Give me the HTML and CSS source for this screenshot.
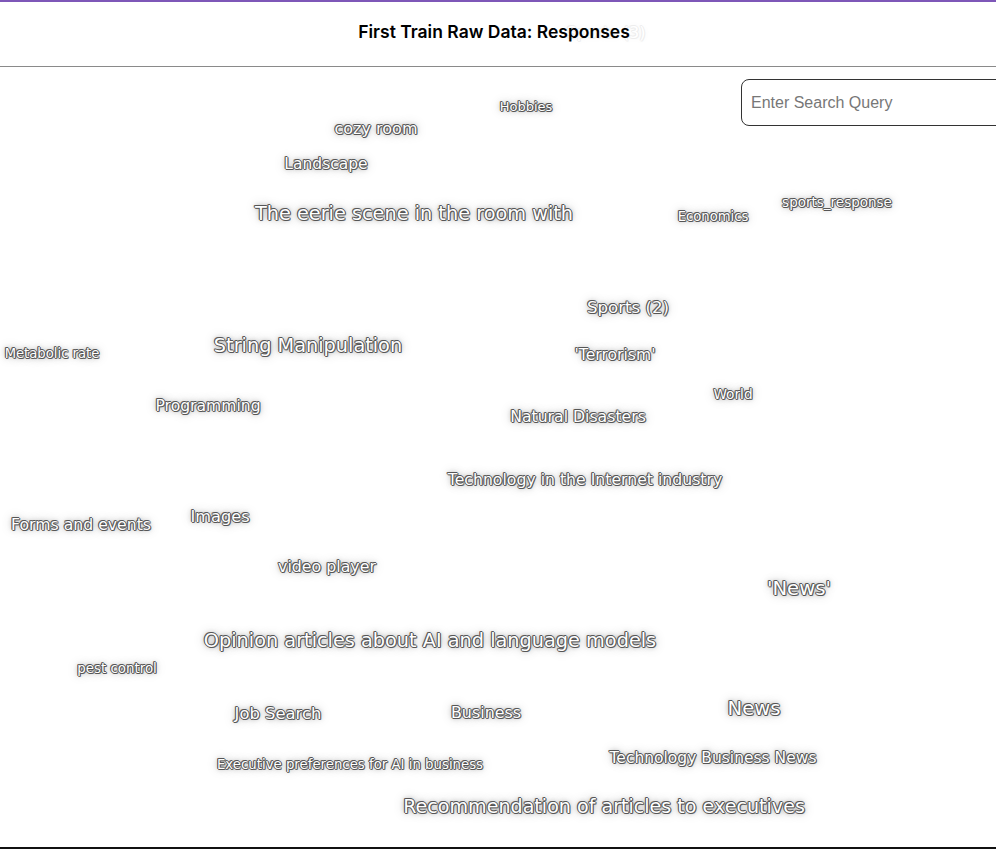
FILE: index.html
```html
<!DOCTYPE html>
<html>
<head>
    <title>First Train Raw Data: Responses</title>
    <link rel="stylesheet" href="styles.css">
</head>
<body>
    <header class="topbar">
        <h1>First Train Raw Data: Responses</h1>
    </header>
    <div class="cloud">
        <input class="search" type="text" placeholder="Enter Search Query">

        <span class="word ghost" style="left: 606px; top: -34px; font-size: 16px;">Sports (3)</span>
        <span class="word" style="left: 526px; top: 39px; font-size: 13px;">Hobbies</span>
        <span class="word" style="left: 376px; top: 62px; font-size: 16px;">cozy room</span>
        <span class="word" style="left: 326px; top: 98px; font-size: 15.5px;">Landscape</span>
        <span class="word" style="left: 414px; top: 147px; font-size: 19.3px;">The eerie scene in the room with</span>
        <span class="word" style="left: 713px; top: 150px; font-size: 13.2px;">Economics</span>
        <span class="word" style="left: 837px; top: 136px; font-size: 13.5px;">sports_response</span>
        <span class="word" style="left: 628px; top: 241px; font-size: 16.6px;">Sports (2)</span>
        <span class="word" style="left: 52px; top: 287px; font-size: 13.2px;">Metabolic rate</span>
        <span class="word" style="left: 308px; top: 279px; font-size: 19.3px;">String Manipulation</span>
        <span class="word" style="left: 615px; top: 289px; font-size: 15.6px;">'Terrorism'</span>
        <span class="word" style="left: 733px; top: 328px; font-size: 13.7px;">World</span>
        <span class="word" style="left: 208px; top: 340px; font-size: 15.6px;">Programming</span>
        <span class="word" style="left: 578px; top: 350px; font-size: 15.7px;">Natural Disasters</span>
        <span class="word" style="left: 585px; top: 413px; font-size: 15.7px;">Technology in the Internet industry</span>
        <span class="word" style="left: 81px; top: 458px; font-size: 15.7px;">Forms and events</span>
        <span class="word" style="left: 220px; top: 450px; font-size: 16.2px;">Images</span>
        <span class="word" style="left: 327px; top: 500px; font-size: 15.8px;">video player</span>
        <span class="word" style="left: 799px; top: 522px; font-size: 19.7px;">'News'</span>
        <span class="word" style="left: 430px; top: 574px; font-size: 19.3px;">Opinion articles about AI and language models</span>
        <span class="word" style="left: 117px; top: 602px; font-size: 13.4px;">pest control</span>
        <span class="word" style="left: 278px; top: 647px; font-size: 16.4px;">Job Search</span>
        <span class="word" style="left: 486px; top: 646px; font-size: 15.9px;">Business</span>
        <span class="word" style="left: 754px; top: 642px; font-size: 19.6px;">News</span>
        <span class="word" style="left: 713px; top: 692px; font-size: 15.5px;">Technology Business News</span>
        <span class="word" style="left: 350px; top: 698px; font-size: 13.3px;">Executive preferences for AI in business</span>
        <span class="word" style="left: 604px; top: 740px; font-size: 19.1px;">Recommendation of articles to executives</span>
    </div>
</body>
</html>
```

FILE: styles.css
```css
html, body {
    margin: 0;
    padding: 0;
    background-color: #fff;
    overflow: hidden;
}

.topbar {
    position: relative;
    z-index: 2;
    height: 64px;
    box-sizing: content-box;
    border-top: 2px solid #7e57b8;
    border-bottom: 1px solid #8a8a8a;
    background-color: rgba(255, 255, 255, 0.85);
    display: flex;
    align-items: center;
    justify-content: center;
}

.topbar h1 {
    margin: 0 8px 6px 0;
    font-family: Inter, "Liberation Sans", sans-serif;
    font-size: 17.5px;
    font-weight: 600;
    color: #000;
}

.cloud {
    position: relative;
    height: 780px;
    border-bottom: 2px solid #111;
}

.search {
    position: absolute;
    z-index: 3;
    top: 12px;
    left: 741px;
    width: 300px;
    height: 47px;
    box-sizing: border-box;
    padding: 0 9px;
    border: 1px solid #333;
    border-radius: 8px;
    font-family: "Liberation Sans", Arial, sans-serif;
    font-size: 16px;
    outline: none;
}

.search::placeholder {
    color: #777;
}

.word {
    position: absolute;
    z-index: 1;
    transform: translate(-50%, -50%);
    white-space: nowrap;
    line-height: 1;
    font-family: "DejaVu Sans", Verdana, sans-serif;
    color: #fff;
    text-shadow:
        -1px 0 #555,
        1px 0 #555,
        0 -1px #555,
        0 1px #555,
        -1px -1px #777,
        1px 1px #777,
        0 0 5px rgba(0, 0, 0, 0.4),
        0 0 12px rgba(0, 0, 0, 0.3);
}

.word.ghost {
    opacity: 0.7;
}
```
